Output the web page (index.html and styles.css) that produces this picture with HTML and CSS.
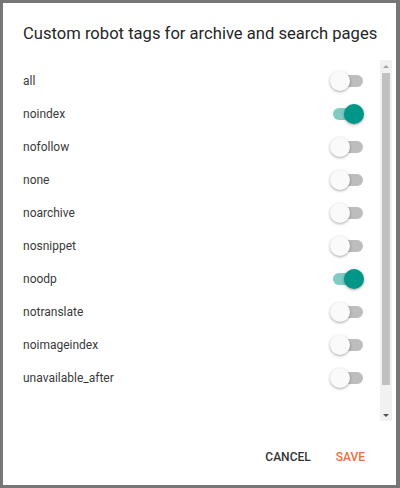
FILE: index.html
```html
<!DOCTYPE html>
<html>
<head>
<meta charset="utf-8">
<link rel="stylesheet" href="styles.css">
</head>
<body>
<div class="dialog">
  <h2 class="title">Custom robot tags for archive and search pages</h2>
  <div class="content">
    <ul class="list">
      <li class="row"><span>all</span><span class="toggle"><span class="track"></span><span class="thumb"></span></span></li>
      <li class="row"><span>noindex</span><span class="toggle on"><span class="track"></span><span class="thumb"></span></span></li>
      <li class="row"><span>nofollow</span><span class="toggle"><span class="track"></span><span class="thumb"></span></span></li>
      <li class="row"><span>none</span><span class="toggle"><span class="track"></span><span class="thumb"></span></span></li>
      <li class="row"><span>noarchive</span><span class="toggle"><span class="track"></span><span class="thumb"></span></span></li>
      <li class="row"><span>nosnippet</span><span class="toggle"><span class="track"></span><span class="thumb"></span></span></li>
      <li class="row"><span>noodp</span><span class="toggle on"><span class="track"></span><span class="thumb"></span></span></li>
      <li class="row"><span>notranslate</span><span class="toggle"><span class="track"></span><span class="thumb"></span></span></li>
      <li class="row"><span>noimageindex</span><span class="toggle"><span class="track"></span><span class="thumb"></span></span></li>
      <li class="row"><span>unavailable_after</span><span class="toggle"><span class="track"></span><span class="thumb"></span></span></li>
    </ul>
    <div class="scrollbar">
      <div class="arrow up"></div>
      <div class="sb-track"><div class="sb-thumb"></div></div>
      <div class="arrow down"></div>
    </div>
  </div>
  <div class="actions">
    <button class="btn cancel">Cancel</button>
    <button class="btn save">Save</button>
  </div>
</div>
</body>
</html>
```

FILE: styles.css
```css
html, body {
  margin: 0;
  padding: 0;
}
body {
  background: #767676;
  width: 400px;
  height: 488px;
  font-family: Roboto, "Liberation Sans", sans-serif;
  overflow: hidden;
}
.dialog {
  margin: 3px 0 0 3px;
  width: 393px;
  height: 482px;
  background: #fff;
  display: flex;
  flex-direction: column;
  box-sizing: border-box;
}
.title {
  margin: 0;
  padding: 21px 0 0 20px;
  height: 57px;
  box-sizing: border-box;
  font-size: 16.6px;
  line-height: 20px;
  font-weight: 400;
  color: #262626;
  white-space: nowrap;
}
.content {
  height: 361px;
  display: flex;
}
.list {
  list-style: none;
  margin: 0;
  padding: 4px 0 0 20px;
  flex: 1;
}
.row {
  height: 33.1px;
  display: flex;
  align-items: center;
  justify-content: space-between;
  padding-right: 16px;
  font-size: 12px;
  color: #3a3a3a;
}
.toggle {
  position: relative;
  width: 34px;
  height: 20px;
}
.track {
  position: absolute;
  left: 3px;
  top: 4px;
  width: 30px;
  height: 12px;
  border-radius: 6px;
  background: #bdbdbd;
}
.thumb {
  position: absolute;
  left: 0;
  top: 0;
  width: 20px;
  height: 20px;
  border-radius: 50%;
  background: #fafafa;
  box-shadow: 0 1px 3px rgba(0,0,0,0.35);
}
.toggle.on .track {
  background: #80cbc4;
}
.toggle.on .thumb {
  left: 14px;
  background: #009688;
}
.scrollbar {
  width: 12px;
  margin-right: 4px;
  background: #f1f1f1;
  display: flex;
  flex-direction: column;
}
.arrow {
  height: 12px;
  display: flex;
  align-items: center;
  justify-content: center;
}
.arrow::before {
  content: "";
  border-left: 3px solid transparent;
  border-right: 3px solid transparent;
}
.arrow.up::before {
  border-bottom: 3px solid #a3a3a3;
}
.arrow.down::before {
  border-top: 3px solid #505050;
}
.sb-track {
  flex: 1;
  display: flex;
  flex-direction: column;
}
.sb-thumb {
  height: 312px;
  margin: 1px 2px 0 2px;
  background: #c1c1c1;
}
.actions {
  flex: 1;
  display: flex;
  justify-content: flex-end;
  align-items: center;
  gap: 8px;
  padding-right: 25px;
  padding-top: 8px;
}
.btn {
  background: none;
  border: none;
  padding: 0 6px;
  font-family: Roboto, "Liberation Sans", sans-serif;
  font-size: 12px;
  font-weight: 500;
  text-transform: uppercase;
  cursor: pointer;
}
.cancel {
  color: #333;
  margin-right: 5px;
}
.save {
  color: #e8703a;
}
```
